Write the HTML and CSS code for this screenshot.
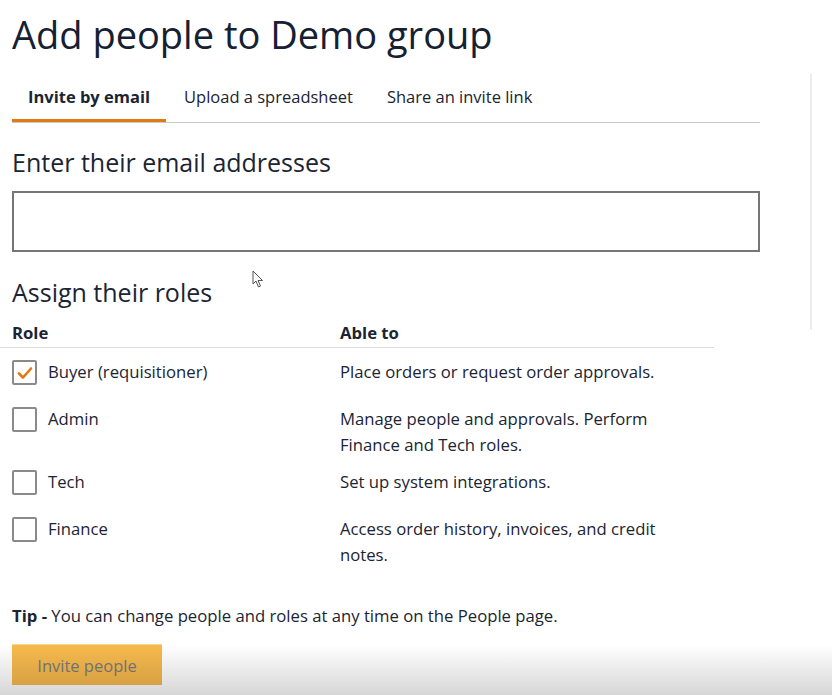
FILE: index.html
```html
<!DOCTYPE html>
<html lang="en">
<head>
    <meta charset="UTF-8">
    <title>Add people to Demo group</title>
    <link rel="stylesheet" href="styles.css">
</head>
<body>
<div class="page">
    <h1 class="title">Add people to Demo group</h1>
    <div class="tabs">
        <span class="tab active">Invite by email</span>
        <span class="tab">Upload a spreadsheet</span>
        <span class="tab">Share an invite link</span>
    </div>

    <h2 class="heading">Enter their email addresses</h2>
    <div class="emailBox"></div>

    <h2 class="heading roles">Assign their roles</h2>
    <div class="roleTable">
        <div class="roleHead">
            <span class="headRole">Role</span>
            <span class="headAble">Able to</span>
        </div>
        <div class="roleRow">
            <div class="colRole">
                <span class="check checked">
                    <svg width="16" height="14" viewBox="0 0 16 14"><path d="M2 7.5 L6 11.5 L14 2.5" fill="none" stroke="#e47911" stroke-width="2.6" stroke-linecap="round" stroke-linejoin="round"/></svg>
                </span>
                <span class="label">Buyer (requisitioner)</span>
            </div>
            <div class="colAble">Place orders or request order approvals.</div>
        </div>
        <div class="roleRow">
            <div class="colRole"><span class="check"></span><span class="label">Admin</span></div>
            <div class="colAble">Manage people and approvals. Perform Finance and Tech roles.</div>
        </div>
        <div class="roleRow">
            <div class="colRole"><span class="check"></span><span class="label">Tech</span></div>
            <div class="colAble">Set up system integrations.</div>
        </div>
        <div class="roleRow">
            <div class="colRole"><span class="check"></span><span class="label">Finance</span></div>
            <div class="colAble">Access order history, invoices, and credit notes.</div>
        </div>
    </div>

    <p class="tip"><b>Tip -</b> You can change people and roles at any time on the People page.</p>
    <button class="inviteBtn">Invite people</button>
</div>

<div class="scrollTrack"></div>
<svg class="cursor" width="13" height="19" viewBox="0 0 13 19"><path d="M1 1 L1 14 L4 11 L6.5 17 L8.5 16 L6 10.5 L10.5 10.5 Z" fill="#fff" stroke="#555" stroke-width="1"/></svg>
<div class="fade"></div>
</body>
</html>
```

FILE: styles.css
```css
body{
    margin: 0;
    background: #ffffff;
    font-family: "Open Sans", "Noto Sans", sans-serif;
    color: #1b2433;
}
.page{
    width: 748px;
    padding-left: 12px;
}
.title{
    margin: 0;
    padding-top: 11px;
    font-size: 38px;
    line-height: 46px;
    font-weight: 400;
    color: #152033;
}
.tabs{
    display: flex;
    margin-top: 13px;
    border-bottom: 1px solid #c8c8c8;
}
.tab{
    padding: 15px 16px 10px;
    font-size: 16.5px;
    line-height: 24px;
    border-bottom: 3px solid transparent;
}
.tab + .tab{
    padding-left: 18px;
}
.tab.active{
    font-weight: 700;
    border-bottom-color: #e47911;
}
.heading{
    margin: 23px 0 0;
    font-size: 25px;
    line-height: 32px;
    font-weight: 400;
}
.emailBox{
    margin-top: 13px;
    height: 57px;
    border: 2px solid #767676;
}
.heading.roles{
    margin-top: 24px;
}
.roleTable{
    margin: 13px 0 0 -12px;
    width: 714px;
    font-size: 16.7px;
}
.roleHead{
    display: flex;
    padding: 0 0 2px 12px;
    line-height: 24px;
    font-weight: 700;
    border-bottom: 1px solid #dddddd;
}
.headRole{
    width: 328px;
}
.roleRow{
    display: flex;
    padding: 12px 0 0 12px;
}
.colRole{
    width: 328px;
    display: flex;
    align-items: flex-start;
    min-height: 35px;
}
.colAble{
    width: 345px;
    line-height: 26px;
    margin-top: -1px;
}
.check{
    box-sizing: border-box;
    width: 25px;
    height: 25px;
    border: 2px solid #8a8a8a;
    border-radius: 2px;
    display: flex;
    align-items: center;
    justify-content: center;
}
.label{
    margin-left: 11px;
    line-height: 26px;
    margin-top: -1px;
}
.tip{
    margin: 36px 0 0;
    font-size: 16.7px;
    line-height: 24px;
}
.inviteBtn{
    display: block;
    margin-top: 16px;
    width: 150px;
    height: 41px;
    border: none;
    border-top: 1px solid #f9d58c;
    background: #f6b94d;
    color: #7a7a7a;
    font-family: "Open Sans", "Noto Sans", sans-serif;
    font-size: 16.5px;
}
.scrollTrack{
    position: absolute;
    left: 810px;
    top: 74px;
    width: 2px;
    height: 256px;
    background: #ececec;
}
.cursor{
    position: absolute;
    left: 252px;
    top: 270px;
}
.fade{
    position: absolute;
    left: 0;
    top: 645px;
    width: 832px;
    height: 50px;
    background: linear-gradient(rgba(0,0,0,0), rgba(0,0,0,0.16));
    pointer-events: none;
}
```
